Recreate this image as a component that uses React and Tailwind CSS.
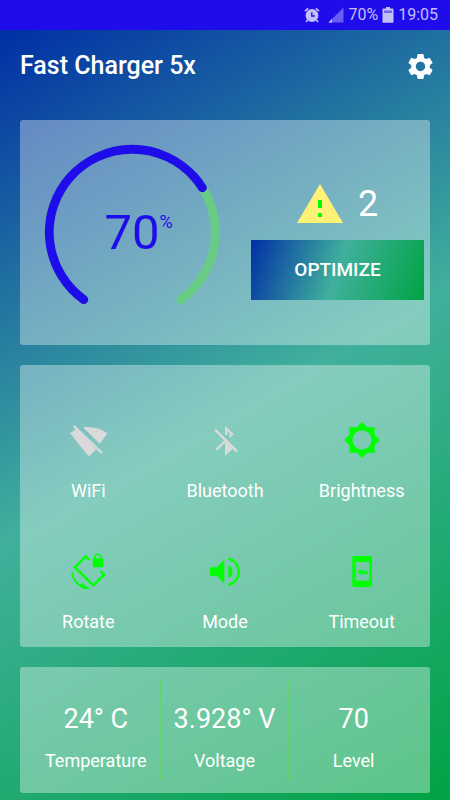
import React, { useState } from 'react';
import { MdBrightness5, MdSettings } from 'react-icons/md';

const BATTERY_LEVEL = 70;

const WifiOffIcon = ({ className }) => (
  <svg viewBox="0 0 40 40" className={className} fill="currentColor">
    <path d="M8.7 9L2 13.3 21 36.7 28 29.3z" />
    <path d="M15.3 7.5C23 6 32 8.2 39.3 13.3L32 24z" />
    <path d="M5.6 5.8L34 33" stroke="currentColor" strokeWidth="2.4" />
  </svg>
);

const BluetoothOffIcon = ({ className }) => (
  <svg viewBox="0 0 40 40" className={className} fill="none" stroke="currentColor" strokeWidth="2.4">
    <path d="M10 9.7L32 31.3" />
    <path d="M21.2 15V8.5L27 14 24.5 16.8" />
    <path d="M11.5 29.7L20.7 20.5" />
    <path d="M20 20V35.7L28.3 28.3z" fill="currentColor" stroke="none" />
  </svg>
);

const RotateLockIcon = ({ className }) => (
  <svg viewBox="0 0 40 40" className={className} fill="none" stroke="currentColor" strokeWidth="2.4">
    <path d="M21.3 9L17.8 5.4 6.8 16.2 25.3 34.4 36.2 23.7 32.6 20" />
    <path d="M4.2 21.3C4.6 29.5 11.5 36.6 20.5 37" strokeWidth="1.8" />
    <path d="M14 31.8L21.5 38H16C14 37 12.8 35.8 12 34.5z" fill="currentColor" stroke="none" />
    <path d="M26.5 8V6.7a3.5 3.5 0 0 1 7 0V8" strokeWidth="1.4" />
    <rect x="24.7" y="7.3" width="10.6" height="9" rx="0.8" fill="currentColor" stroke="none" />
  </svg>
);

const VolumeIcon = ({ className }) => (
  <svg viewBox="0 0 40 40" className={className} fill="currentColor">
    <path d="M5 16.3h6.7L19.3 8.500V32.500L11.700 24.700H5z" />
    <path d="M23.3 14.300C26.200 15.600 27.500 18 27.500 20.700S26.200 26 23.300 27.300z" />
    <path
      d="M23.500 7.500C30 9.300 33.700 14.500 33.700 20.700S30 32.300 23.500 34"
      fill="none"
      stroke="currentColor"
      strokeWidth="2.400"
    />
  </svg>
);

const TimeoutIcon = ({ className }) => (
  <svg viewBox="0 0 40 40" className={className} fill="currentColor">
    <path
      fillRule="evenodd"
      d="M12.3 5h15.7a2 2 0 0 1 2 2v27a2 2 0 0 1-2 2H12.3a2 2 0 0 1-2-2V7a2 2 0 0 1 2-2zM13.7 11v18.7h13.6V11z"
    />
    <text
      x="20.5"
      y="23"
      textAnchor="middle"
      fontSize="6"
      fontWeight="900"
      fontFamily="Roboto, sans-serif"
      stroke="currentColor"
      strokeWidth="0.5"
    >
      40s
    </text>
  </svg>
);

const AlarmIcon = () => (
  <svg viewBox="0 0 16 16" className="w-4 h-4" fill="none" stroke="currentColor">
    <circle cx="8" cy="8.5" r="6.4" fill="currentColor" stroke="none" />
    <path d="M1 4.2L4.2 1.3M15 4.2L11.8 1.3" strokeWidth="1.8" />
    <path d="M3.5 13L2 15M12.5 13L14 15" strokeWidth="1.6" />
    <path d="M7.8 5.2V9h3" stroke="#1f0ceb" strokeWidth="1.3" />
  </svg>
);

const SignalIcon = () => (
  <svg viewBox="0 0 16 16" className="w-4 h-4" fill="currentColor">
    <path d="M15.5 .5V15.5H.5z" opacity="0.45" />
    <path d="M4 12V15.5H.5z" />
  </svg>
);

const BatteryIcon = () => (
  <svg viewBox="0 0 12 16" className="w-3 h-4" fill="currentColor">
    <path d="M4 0h4v2H4z" />
    <path d="M1.5 1.5h9a1 1 0 0 1 1 1V15a.8.8 0 0 1-.8.8H1.3a.8.8 0 0 1-.8-.8V2.5a1 1 0 0 1 1-1z" />
    <path d="M2 3.5h8v2.5H2z" fill="#1f0ceb" opacity="0.5" />
  </svg>
);

const StatusBar = () => (
  <div className="flex items-center justify-end h-[30px] pr-3 bg-[#1f0ceb] text-[#c4bffa] text-base">
    <AlarmIcon />
    <span className="ml-2">
      <SignalIcon />
    </span>
    <span className="ml-1">{BATTERY_LEVEL}%</span>
    <span className="ml-1 mr-1">
      <BatteryIcon />
    </span>
    <span>19:05</span>
  </div>
);

const Card = ({ className, children }) => (
  <section className={`rounded-[3px] bg-white/36 ${className}`}>{children}</section>
);

const ARC = 'M39.8 155.6A83 83 0 1 1 136.8 155.6';

const Gauge = ({ value }) => (
  <div className="relative flex items-center justify-center w-44 h-44 shrink-0 text-[#1f0ceb]">
    <svg viewBox="0 0 176 176" className="absolute inset-0 w-full h-full" fill="none" strokeWidth="8.8" strokeLinecap="round">
      <path d={ARC} stroke="#68cc86" />
      <path d={ARC} stroke="currentColor" pathLength="100" strokeDasharray={`${value} 200`} />
    </svg>
    <span className="relative text-[49px] leading-none">
      {value}
      <span className="absolute left-full top-1 text-lg leading-5">%</span>
    </span>
  </div>
);

const TILES = [
  { id: 'wifi', label: 'WiFi', icon: WifiOffIcon, size: 'w-10 h-10' },
  { id: 'bluetooth', label: 'Bluetooth', icon: BluetoothOffIcon, size: 'w-10 h-10' },
  { id: 'brightness', label: 'Brightness', icon: MdBrightness5, size: 'w-[38px] h-[38px]' },
  { id: 'rotate', label: 'Rotate', icon: RotateLockIcon, size: 'w-10 h-10' },
  { id: 'mode', label: 'Mode', icon: VolumeIcon, size: 'w-10 h-10' },
  { id: 'timeout', label: 'Timeout', icon: TimeoutIcon, size: 'w-10 h-10' },
];

const STATS = [
  { label: 'Temperature', value: '24° C' },
  { label: 'Voltage', value: '3.928° V' },
  { label: 'Level', value: `${BATTERY_LEVEL}` },
];

const App = () => {
  const [enabled, setEnabled] = useState({
    wifi: false,
    bluetooth: false,
    brightness: true,
    rotate: true,
    mode: true,
    timeout: true,
  });

  const toggle = (id) => setEnabled({ ...enabled, [id]: !enabled[id] });

  return (
    <div className="flex flex-col min-h-screen font-[Roboto,sans-serif] text-white">
      <StatusBar />

      <div className="flex-1 bg-[linear-gradient(150deg,#002fa5_0%,#40b09c_50%,#00a344_100%)]">
        <header className="flex items-center justify-between pt-5 pb-[38px] pl-5 pr-[14px]">
          <h1 className="text-[25px] leading-8 font-medium">Fast Charger 5x</h1>
          <button type="button" aria-label="Settings">
            <MdSettings className="w-[31px] h-[31px]" />
          </button>
        </header>

        <main className="flex flex-col gap-5 px-5 pb-[7px]">
          {/* Battery level and optimize */}
          <Card className="flex justify-between pt-6 pb-[25px] pl-6 pr-[6px]">
            <Gauge value={BATTERY_LEVEL} />
            <div className="flex flex-col items-center w-[173px] pt-10">
              <div className="flex items-center gap-[15px] h-10">
                <svg viewBox="0 0 46 40" className="w-[46px] h-10">
                  <path d="M23 0L46 39H0z" fill="#fff176" />
                  <path d="M21 16h4v8h-4zM21 29h4v4h-4z" fill="#00ff00" />
                </svg>
                <span className="text-4xl">2</span>
              </div>
              <button
                type="button"
                className="w-full h-[60px] mt-4 text-[19px] font-medium bg-[linear-gradient(109deg,#002fa5_0%,#40b09c_50%,#00a344_100%)]"
              >
                OPTIMIZE
              </button>
            </div>
          </Card>

          {/* Quick toggles */}
          <Card className="grid grid-cols-3 gap-y-12 pt-[55px] pb-[13px]">
            {TILES.map(({ id, label, icon: Icon, size }) => (
              <button
                key={id}
                type="button"
                aria-pressed={enabled[id]}
                onClick={() => toggle(id)}
                className="flex flex-col items-center gap-[19px]"
              >
                <span
                  className={`flex items-center justify-center w-10 h-10 ${
                    enabled[id] ? 'text-[#00ff00]' : 'text-[#dadada]'
                  }`}
                >
                  <Icon className={size} />
                </span>
                <span className="text-lg leading-6">{label}</span>
              </button>
            ))}
          </Card>

          {/* Battery stats */}
          <Card className="p-3">
            <dl className="grid grid-cols-3 divide-x divide-[#62d46e]">
              {STATS.map((stat) => (
                <div key={stat.label} className="flex flex-col-reverse items-center gap-[14px] pt-6 pb-2">
                  <dt className="text-lg leading-6">{stat.label}</dt>
                  <dd className="text-[27px] leading-8">{stat.value}</dd>
                </div>
              ))}
            </dl>
          </Card>
        </main>
      </div>
    </div>
  );
};

export default App;
